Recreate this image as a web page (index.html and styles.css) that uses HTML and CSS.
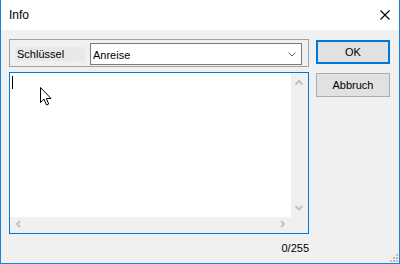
FILE: index.html
```html
<!DOCTYPE html>
<html lang="de">
<head>
  <meta charset="UTF-8">
  <title>Info</title>
  <link rel="stylesheet" href="styles.css">
</head>
<body>
  <div class="window">
    <div class="titlebar">
      <span class="title">Info</span>
      <svg class="close" width="10" height="10" viewBox="0 0 10 10">
        <path d="M0.5 0.5 L9.5 9.5 M9.5 0.5 L0.5 9.5" stroke="#000" stroke-width="1.1" fill="none"/>
      </svg>
    </div>
    <div class="content">
      <div class="main">
        <div class="group">
          <div class="label">Schlüssel</div>
          <div class="combo">
            <span>Anreise</span>
            <svg width="8" height="5" viewBox="0 0 8 5">
              <polyline points="0.5,0.5 4,4 7.5,0.5" stroke="#606060" fill="none"/>
            </svg>
          </div>
        </div>
        <div class="memo">
          <div class="memo-text"><span class="caret"></span></div>
          <div class="vscroll">
            <svg width="17" height="17" viewBox="0 0 17 17"><polyline points="4.5,11.5 8,8 11.5,11.5" stroke="#c2c2c2" stroke-width="2" fill="none"/></svg>
            <svg width="17" height="17" viewBox="0 0 17 17"><polyline points="4.5,6 8,9.5 11.5,6" stroke="#c2c2c2" stroke-width="2" fill="none"/></svg>
          </div>
          <div class="hscroll">
            <svg width="17" height="16" viewBox="0 0 17 16"><polyline points="10,4 7,7 10,10" stroke="#c2c2c2" stroke-width="2" fill="none"/></svg>
            <svg width="17" height="16" viewBox="0 0 17 16"><polyline points="7,4 10,7 7,10" stroke="#c2c2c2" stroke-width="2" fill="none"/></svg>
          </div>
          <div class="corner"></div>
        </div>
        <div class="counter">0/255</div>
      </div>
      <div class="buttons">
        <button class="btn default">OK</button>
        <button class="btn">Abbruch</button>
      </div>
    </div>
    <div class="grip">
      <i></i><i></i><i></i><i></i><i></i><i></i>
    </div>
    <svg class="pointer" width="13" height="20" viewBox="0 0 13 20">
      <path d="M0.5 0.5 L0.5 15.5 L4 12.2 L6.5 18 L8.7 17 L6.3 11.5 L11 11.5 Z" fill="#fff" stroke="#000" stroke-width="1" stroke-linejoin="miter"/>
    </svg>
  </div>
</body>
</html>
```

FILE: styles.css
```css
body { margin: 0; font-family: "Liberation Sans", Arial, sans-serif; font-size: 11px; color: #000; }
.window { position: relative; width: 400px; height: 264px; box-sizing: border-box; border: 1px solid #1883d7; border-top: 0; background: #f0f0f0; }
.titlebar { height: 30px; background: #fff; display: flex; align-items: center; justify-content: space-between; padding: 0 9px 0 8px; }
.title { font-size: 12px; }
.close { display: block; }
.content { display: flex; padding: 9px 9px 0 8px; }
.main { width: 300px; }
.group { height: 28px; box-sizing: border-box; border: 1px solid #a0a0a0; display: flex; align-items: center; padding: 2px 6px 0 5px; }
.label { width: 70px; height: 14px; line-height: 14px; background: #e8e8e8; padding-left: 2px; box-sizing: border-box; margin-right: 5px; }
.combo { width: 212px; height: 22px; box-sizing: border-box; border: 1px solid #7a7a7a; background: #fff; display: flex; align-items: center; justify-content: space-between; padding: 1px 5px 0 2px; }
.combo svg { display: block; }
.memo { margin-top: 5px; height: 162px; box-sizing: border-box; border: 1px solid #0078d7; display: grid; grid-template-columns: 1fr 17px; grid-template-rows: 1fr 16px; }
.memo-text { background: #fff; padding: 3px 2px; }
.caret { display: block; width: 1px; height: 13px; background: #000; }
.vscroll { background: #f0f0f0; display: flex; flex-direction: column; justify-content: space-between; }
.hscroll { background: #f0f0f0; display: flex; justify-content: space-between; align-items: flex-start; }
.vscroll svg, .hscroll svg { display: block; }
.corner { background: #f0f0f0; }
.counter { text-align: right; margin-top: 8px; line-height: 13px; }
.buttons { margin-left: 7px; margin-top: 1px; display: flex; flex-direction: column; gap: 9px; }
.btn { width: 74px; height: 24px; box-sizing: border-box; background: #e1e1e1; border: 1px solid #adadad; font-family: "Liberation Sans", Arial, sans-serif; font-size: 11px; color: #000; padding: 0; }
.btn.default { border: 2px solid #0078d7; }
.grip { position: absolute; right: 1px; bottom: 1px; width: 8px; height: 8px; display: grid; grid-template-columns: repeat(3, 2px); grid-template-rows: repeat(3, 2px); gap: 1px; }
.grip i { background: #bcbcbc; }
.grip i:nth-child(1) { grid-area: 1 / 3; }
.grip i:nth-child(2) { grid-area: 2 / 2; }
.grip i:nth-child(3) { grid-area: 2 / 3; }
.grip i:nth-child(4) { grid-area: 3 / 1; }
.grip i:nth-child(5) { grid-area: 3 / 2; }
.grip i:nth-child(6) { grid-area: 3 / 3; }
.pointer { position: absolute; left: 39px; top: 87px; }
```
